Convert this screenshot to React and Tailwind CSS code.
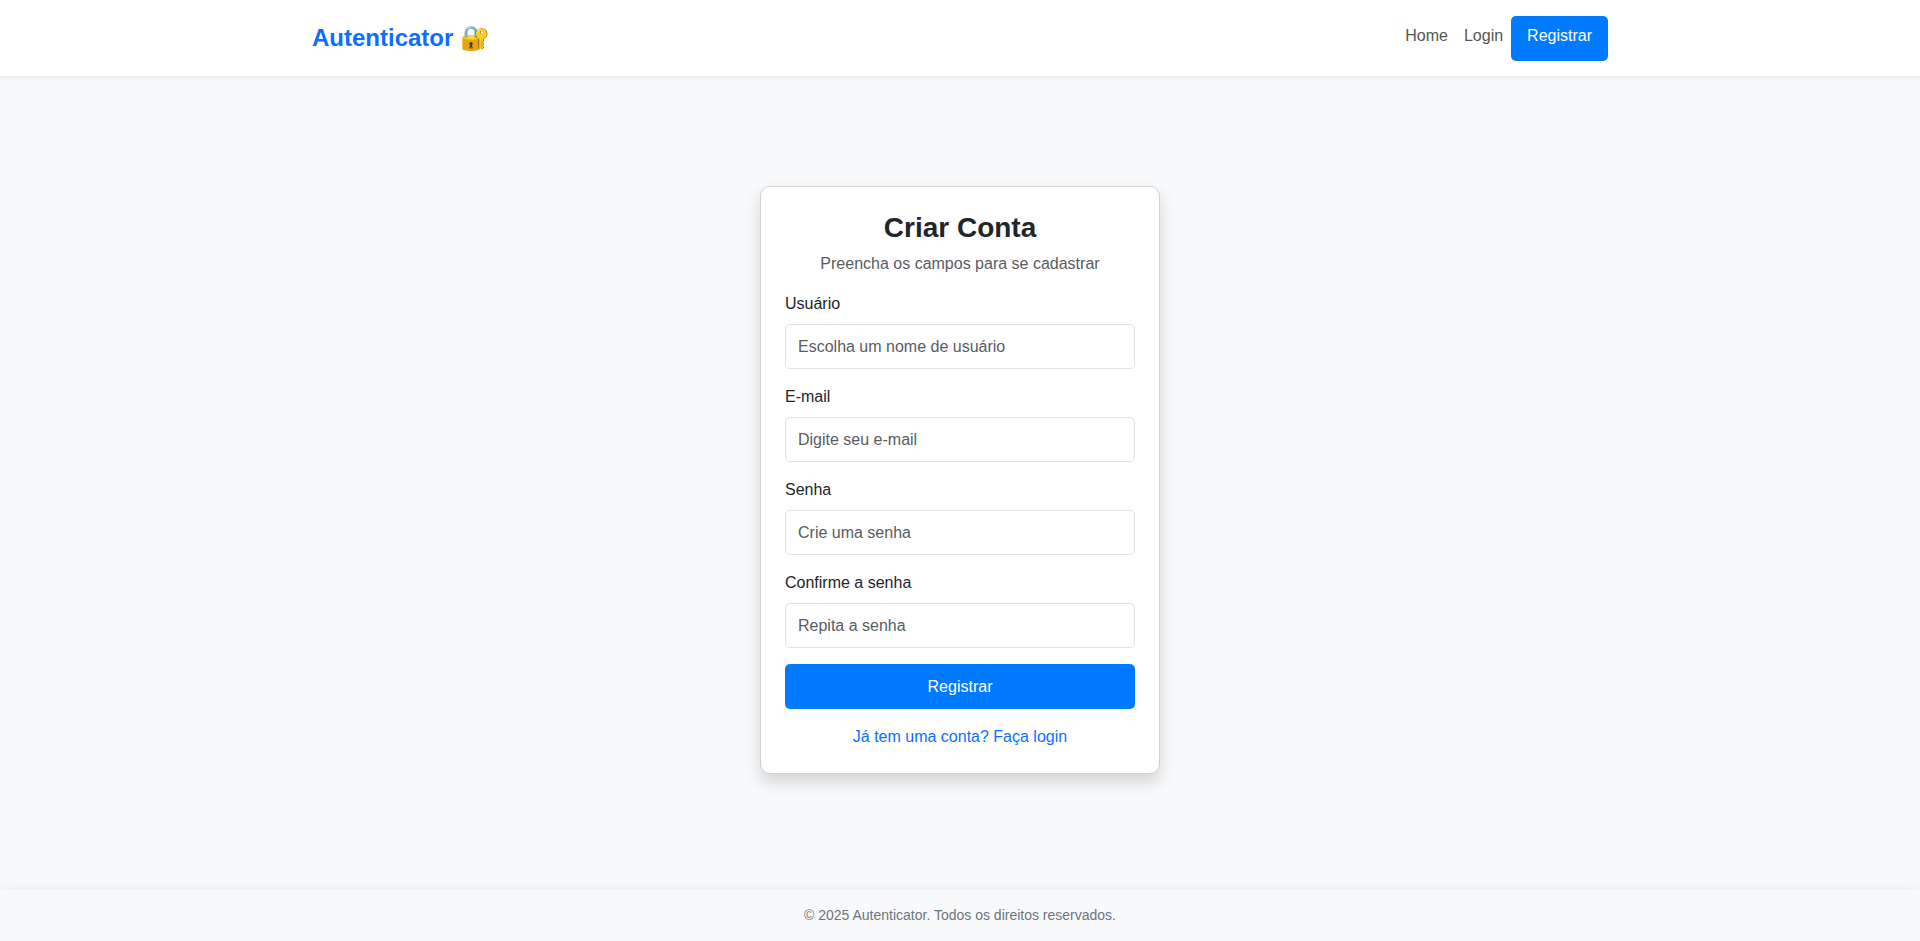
const fields = [
  { id: "username", label: "Usuário", type: "text", placeholder: "Escolha um nome de usuário" },
  { id: "email", label: "E-mail", type: "email", placeholder: "Digite seu e-mail" },
  { id: "password", label: "Senha", type: "password", placeholder: "Crie uma senha" },
  { id: "confirm", label: "Confirme a senha", type: "password", placeholder: "Repita a senha" },
];

function Header() {
  return (
    <header className="bg-white pt-4 pb-[15px] shadow-[0_2px_4px_rgba(0,0,0,0.075)]">
      <div className="mx-auto flex max-w-[1320px] items-start justify-between px-3">
        <a href="#" className="text-2xl leading-11 font-bold text-[#0d6efd]">Autenticator 🔐</a>
        <nav className="flex">
          <a href="#home" className="p-2 text-[#555555]">Home</a>
          <a href="#login" className="p-2 text-[#555555]">Login</a>
          <a href="#register" className="h-[45px] rounded-[5px] bg-[#007bff] px-4 py-2 text-white">Registrar</a>
        </nav>
      </div>
    </header>
  );
}

function RegisterCard() {
  return (
    <section className="w-[400px] rounded-[10px] border border-[#d0d0d0] bg-white p-6 shadow-[0_8px_16px_rgba(0,0,0,0.15)]">
      <h1 className="mb-2 text-center text-[28px] leading-[33px] font-bold">Criar Conta</h1>
      <p className="mb-4 text-center text-[#595c5f]">Preencha os campos para se cadastrar</p>
      <form onSubmit={(e) => e.preventDefault()}>
        {fields.map((f) => (
          <div key={f.id} className="mb-4">
            <label htmlFor={f.id} className="mb-2 block">{f.label}</label>
            <input
              id={f.id}
              type={f.type}
              placeholder={f.placeholder}
              className="block h-[45px] w-full rounded-[5px] border border-[#dee2e6] px-3 pt-px placeholder:text-[#595c5f]"
            />
          </div>
        ))}
        <button type="submit" className="h-[45px] w-full rounded-[5px] bg-[#007bff] text-white">Registrar</button>
      </form>
      <div className="mt-4 text-center">
        <a href="#login" className="text-[#0d6efd]">Já tem uma conta? Faça login</a>
      </div>
    </section>
  );
}

export default function App() {
  return (
    <div className="flex min-h-screen flex-col bg-[#f8f9fa] font-[Arial,'Liberation_Sans',sans-serif] text-base text-[#212529]">
      <Header />
      <main className="flex grow items-center justify-center pb-1.5">
        <RegisterCard />
      </main>
      <footer className="py-[15px] text-center text-sm leading-[21px] text-[#6c757d] shadow-[0_-2px_10px_rgba(0,0,0,0.05)]">
        © 2025 Autenticator. Todos os direitos reservados.
      </footer>
    </div>
  );
}
